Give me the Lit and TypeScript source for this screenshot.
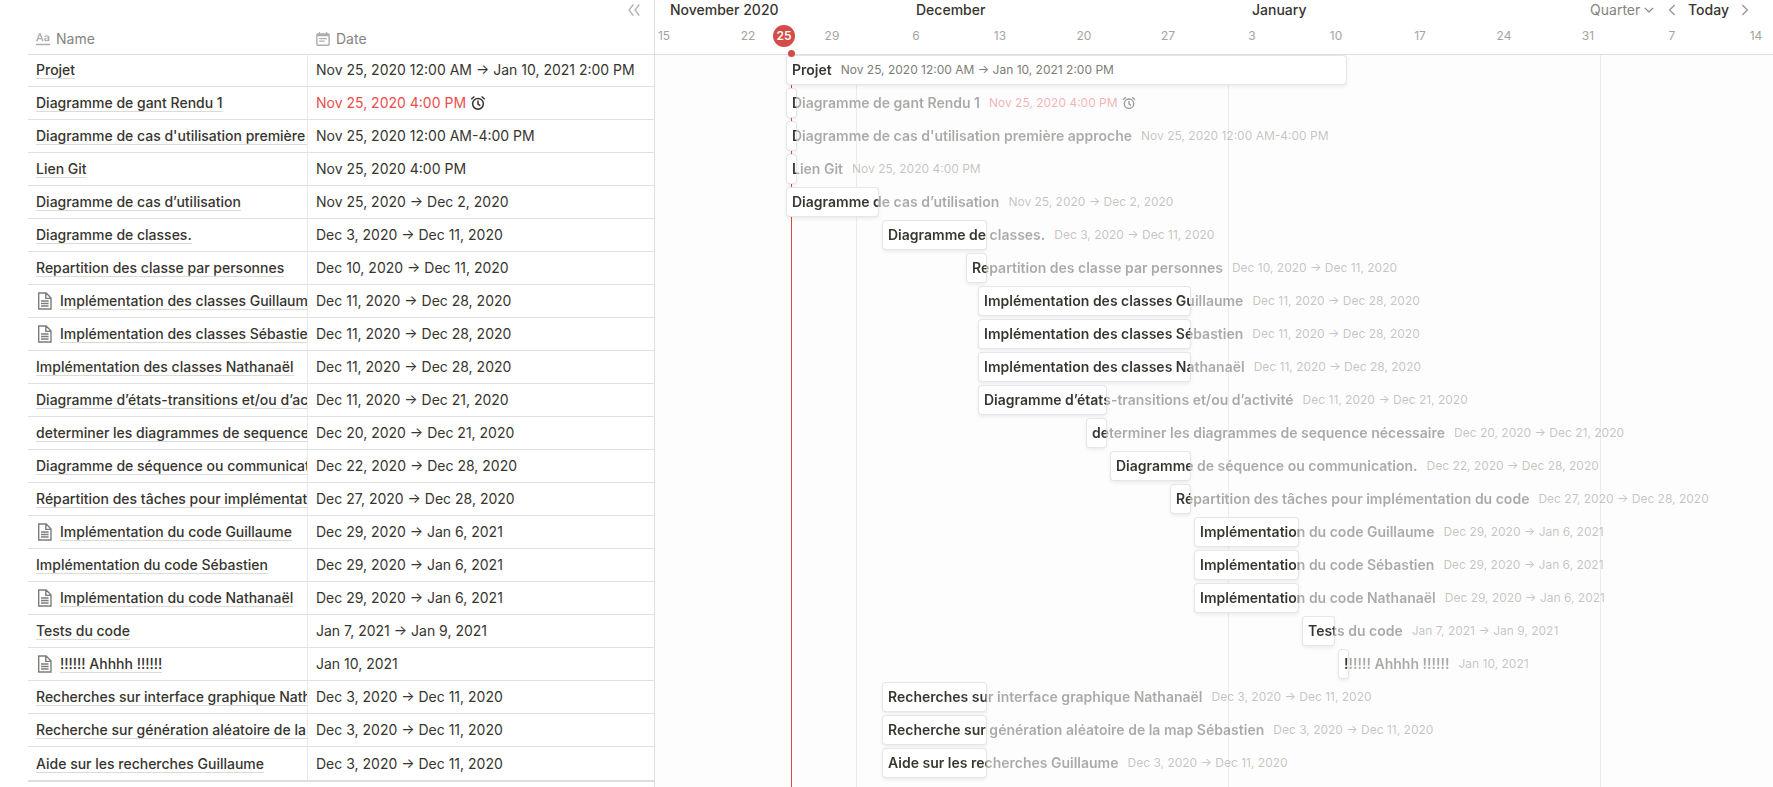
import { LitElement, html, svg, css, nothing } from "lit";
import { customElement, property } from "lit/decorators.js";
import { styleMap } from "lit/directives/style-map.js";

interface Task {
  name: string;
  date: string;
  /** First and last day, counted from Nov 15, 2020. */
  start: number;
  end: number;
  page?: boolean;
  late?: boolean;
}

const DAY = 12;
const ORIGIN = 9;
/** Bars longer than this many days hold their whole label. */
const LONG_BAR = 30;

const TASKS: Task[] = [
  { name: "Projet", date: "Nov 25, 2020 12:00 AM → Jan 10, 2021 2:00 PM", start: 10, end: 56 },
  { name: "Diagramme de gant Rendu 1", date: "Nov 25, 2020 4:00 PM", start: 10, end: 10, late: true },
  { name: "Diagramme de cas d'utilisation première approche", date: "Nov 25, 2020 12:00 AM-4:00 PM", start: 10, end: 10 },
  { name: "Lien Git", date: "Nov 25, 2020 4:00 PM", start: 10, end: 10 },
  { name: "Diagramme de cas d’utilisation", date: "Nov 25, 2020 → Dec 2, 2020", start: 10, end: 17 },
  { name: "Diagramme de classes.", date: "Dec 3, 2020 → Dec 11, 2020", start: 18, end: 26 },
  { name: "Repartition des classe par personnes", date: "Dec 10, 2020 → Dec 11, 2020", start: 25, end: 26 },
  { name: "Implémentation des classes Guillaume", date: "Dec 11, 2020 → Dec 28, 2020", start: 26, end: 43, page: true },
  { name: "Implémentation des classes Sébastien", date: "Dec 11, 2020 → Dec 28, 2020", start: 26, end: 43, page: true },
  { name: "Implémentation des classes Nathanaël", date: "Dec 11, 2020 → Dec 28, 2020", start: 26, end: 43 },
  { name: "Diagramme d’états-transitions et/ou d’activité", date: "Dec 11, 2020 → Dec 21, 2020", start: 26, end: 36 },
  { name: "determiner les diagrammes de sequence nécessaire", date: "Dec 20, 2020 → Dec 21, 2020", start: 35, end: 36 },
  { name: "Diagramme de séquence ou communication.", date: "Dec 22, 2020 → Dec 28, 2020", start: 37, end: 43 },
  { name: "Répartition des tâches pour implémentation du code", date: "Dec 27, 2020 → Dec 28, 2020", start: 42, end: 43 },
  { name: "Implémentation du code Guillaume", date: "Dec 29, 2020 → Jan 6, 2021", start: 44, end: 52, page: true },
  { name: "Implémentation du code Sébastien", date: "Dec 29, 2020 → Jan 6, 2021", start: 44, end: 52 },
  { name: "Implémentation du code Nathanaël", date: "Dec 29, 2020 → Jan 6, 2021", start: 44, end: 52, page: true },
  { name: "Tests du code", date: "Jan 7, 2021 → Jan 9, 2021", start: 53, end: 55 },
  { name: "!!!!!! Ahhhh !!!!!!", date: "Jan 10, 2021", start: 56, end: 56, page: true },
  { name: "Recherches sur interface graphique Nathanaël", date: "Dec 3, 2020 → Dec 11, 2020", start: 18, end: 26 },
  { name: "Recherche sur génération aléatoire de la map Sébastien", date: "Dec 3, 2020 → Dec 11, 2020", start: 18, end: 26 },
  { name: "Aide sur les recherches Guillaume", date: "Dec 3, 2020 → Dec 11, 2020", start: 18, end: 26 },
];

const MONTH_STARTS = [16, 47, 78];
const MONTHS = [
  { label: "December", day: 21 },
  { label: "January", day: 49 },
];
const DAYS = [
  { label: "15", day: 0 },
  { label: "22", day: 7 },
  { label: "25", day: 10, today: true },
  { label: "29", day: 14 },
  { label: "6", day: 21 },
  { label: "13", day: 28 },
  { label: "20", day: 35 },
  { label: "27", day: 42 },
  { label: "3", day: 49 },
  { label: "10", day: 56 },
  { label: "17", day: 63 },
  { label: "24", day: 70 },
  { label: "31", day: 77 },
  { label: "7", day: 84 },
  { label: "14", day: 91 },
];

const at = (day: number) => styleMap({ left: `${day * DAY + ORIGIN}px` });

const clock = svg`<g fill="none" stroke="currentColor" stroke-width="1.5">
  <circle cx="8" cy="8.8" r="5.4"/><path d="M8 5.6V9l2.3 1.7M1.2 4.2L4.4 1.5M14.8 4.2L11.6 1.5"/></g>`;

const shared = css`
  * { box-sizing: border-box; }
  svg { display: block; flex: none; }
  button, select { font: inherit; color: inherit; background: none; border: 0; padding: 0; margin: 0; appearance: none; cursor: pointer; }
`;

@customElement("task-table")
class TaskTable extends LitElement {
  @property({ attribute: false }) tasks: Task[] = [];

  static styles = [
    shared,
    css`
      :host { display: block; }
      .tools { display: flex; justify-content: flex-end; align-items: center; height: 20px; padding-right: 13px; margin-bottom: 4px; color: #b5b4b1; }
      .wrap { padding-left: 28px; }
      table { width: 100%; table-layout: fixed; border-collapse: separate; border-spacing: 0; border-bottom: 2px solid #dededd; }
      .name-col { width: 280px; }
      th { height: 30px; padding: 0 8px; font-weight: 400; text-align: left; color: #85847f; }
      .head { display: flex; align-items: center; gap: 6px; }
      .head svg { color: #aeadab; }
      td { height: 33px; padding: 0 8px; border-bottom: 1px solid #e0e0df; white-space: nowrap; overflow: hidden; }
      tr:first-child td { box-shadow: inset 0 1px #dededd; }
      tr:last-child td { border-bottom: 0; }
      .name { border-right: 1px solid #e9e9e8; padding-right: 0; font-weight: 500; }
      .cell { display: flex; align-items: center; gap: 7px; overflow: hidden; height: 24px; }
      .when { gap: 4px; }
      .cell a { color: inherit; text-decoration: none; line-height: 17px; border-bottom: 1px solid #dcdbda; }
      .cell svg { color: #7f7d79; }
      .late { color: #eb4d4d; }
      .cell .clock { color: #37352f; }
    `,
  ];

  render() {
    return html`
      <div class="tools">
        <button aria-label="Hide table">
          <svg width="14" height="14" viewBox="0 0 14 14" fill="none" stroke="currentColor" stroke-width="1.4"><path d="M6.3 1.5L2 7l4.3 5.5M12.3 1.5L8 7l4.3 5.5"/></svg>
        </button>
      </div>
      <div class="wrap">
        <table>
          <colgroup><col class="name-col" /><col /></colgroup>
          <thead>
            <tr>
              <th scope="col"><span class="head">
                <svg width="14" height="14" viewBox="0 0 14 14" fill="currentColor"><path d="M0 11.8h14v1.5H0zM3 1.2h1.7l2.9 8H6l-.6-1.9H2.3L1.7 9.2H.1zm.8 1.9L2.7 6H5zM10.6 3.3c1.8 0 2.8.9 2.8 2.3v3.6H12v-.8c-.4.6-1 .9-1.8.9-1.3 0-2.1-.7-2.1-1.8 0-1.1.8-1.7 2.3-1.8l1.5-.1v-.5c0-.6-.4-.9-1.2-.9-.7 0-1.1.3-1.2.7H8.2c.1-1 1-1.6 2.4-1.6zm1.3 3.2l-1.3.1c-.7 0-1 .3-1 .7s.4.7.9.7c.8 0 1.4-.5 1.4-1.1z"/></svg>
                Name</span></th>
              <th scope="col"><span class="head">
                <svg width="14" height="14" viewBox="0 0 14 14" fill="currentColor"><path d="M10.9 7.3H3.2V6h7.7zM8.6 9.8H3.2V8.500h5.400zM12.1 1.2h-.9V0H9.9v1.2H4.1V0H2.800v1.200h-.9C1 1.2.2 1.9.2 2.8v9.500c0 .9.8 1.6 1.7 1.6h10.2c.9 0 1.7-.7 1.7-1.6V2.8c0-.9-.8-1.6-1.7-1.6zm.3 11.3H1.6V4.2h10.8z"/></svg>
                Date</span></th>
            </tr>
          </thead>
          <tbody>
            ${this.tasks.map(
              (t) => html`<tr>
                <td class="name"><div class="cell">
                  ${t.page
                    ? html`<svg width="17" height="18" viewBox="0 0 17 18" fill="none" stroke="currentColor" stroke-width="1.4"><path d="M2.7 1h7.5l4.8 5v11H2.7zM9.8 1v5.4H15M5 9h7.6M5 11.5h7.6M5 14h7.6"/></svg>`
                    : nothing}
                  <a href="#">${t.name}</a>
                </div></td>
                <td><div class="cell when">
                  <span class=${t.late ? "late" : ""}>${t.date}</span>
                  ${t.late ? html`<svg class="clock" width="16" height="16" viewBox="0 0 16 16">${clock}</svg>` : nothing}
                </div></td>
              </tr>`
            )}
          </tbody>
        </table>
      </div>
    `;
  }
}

@customElement("task-timeline")
class TaskTimeline extends LitElement {
  @property({ attribute: false }) tasks: Task[] = [];

  static styles = [
    shared,
    css`
      :host { display: flex; flex-direction: column; position: relative; overflow: hidden; border-left: 1px solid #e0e0df; }
      .months { display: flex; align-items: center; justify-content: space-between; height: 20px; padding: 0 24px 0 15px; font-weight: 500; position: relative; }
      .month, .day { position: absolute; }
      .controls { display: flex; align-items: center; }
      .range { display: flex; align-items: center; gap: 3px; color: #85847f; font-weight: 400; margin-right: 14px; }
      .step { color: #9b9a97; }
      .today-button { margin: 0 12px; }
      .days { height: 34px; position: relative; font-size: 12px; line-height: 32px; color: #a5a4a1; }
      .day { transform: translateX(-50%); }
      .day.today { top: 5px; width: 22px; height: 22px; line-height: 22px; border-radius: 50%; background: #d44c47; color: #fff; font-weight: 600; text-align: center; }
      .canvas { flex: 1; position: relative; background: #fdfdfd; box-shadow: inset 0 1px #dededd; }
      .rule, .now { position: absolute; top: 1px; bottom: 0; width: 1px; background: #ececeb; }
      .now { background: #d44c47; margin-left: 7px; }
      .dot { position: absolute; top: -4px; width: 7px; height: 7px; margin-left: 4px; border-radius: 50%; background: #d44c47; }
      .row { position: relative; height: 33px; }
      .bar { position: absolute; top: 2px; height: 28px; margin-left: 3px; border-radius: 3px; background: #fff; box-shadow: 0 0 0 1px #e6e6e5, 0 2px 4px #0f0f0f1a; display: flex; align-items: center; gap: 9px; padding-left: 5px; white-space: nowrap; }
      .title {
        font-weight: 600;
        color: #37352f;
        background: linear-gradient(90deg, #37352f var(--inside), #37352f6b var(--inside));
        background-clip: text;
        -webkit-background-clip: text;
        -webkit-text-fill-color: transparent;
      }
      .date { display: flex; gap: 4px; align-items: center; font-size: 12px; color: #37352f4d; }
      .long .date { color: #7d7c78; }
      .late .date { color: #eb4d4d70; }
      .date svg { color: #37352f80; }
    `,
  ];

  render() {
    return html`
      <div class="months">
        <span>November 2020</span>
        ${MONTHS.map((m) => html`<span class="month" style=${at(m.day)}>${m.label}</span>`)}
        <div class="controls">
          <label class="range">
            <select aria-label="Time scale"><option>Quarter</option></select>
            <svg width="10" height="10" viewBox="0 0 10 10" fill="none" stroke="currentColor" stroke-width="1.2"><path d="M.8 2.8L5 7l4.2-4.2"/></svg>
          </label>
          <button class="step" aria-label="Previous">
            <svg width="8" height="12" viewBox="0 0 8 12" fill="none" stroke="currentColor" stroke-width="1.4"><path d="M6.6 1L1.6 6l5 5"/></svg>
          </button>
          <button class="today-button">Today</button>
          <button class="step" aria-label="Next">
            <svg width="8" height="12" viewBox="0 0 8 12" fill="none" stroke="currentColor" stroke-width="1.4"><path d="M1.4 1l5 5-5 5"/></svg>
          </button>
        </div>
      </div>
      <div class="days">
        ${DAYS.map((d) => html`<span class="day ${d.today ? "today" : ""}" style=${at(d.day)}>${d.label}</span>`)}
      </div>
      <div class="canvas">
        ${MONTH_STARTS.map((d) => html`<div class="rule" style=${at(d)}></div>`)}
        <div class="now" style=${at(10)}></div>
        ${this.tasks.map((t) => {
          const width = Math.max(9, (t.end - t.start + 1) * DAY - 5);
          const long = t.end - t.start > LONG_BAR;
          return html`<div class="row ${t.late ? "late" : ""} ${long ? "long" : ""}">
            <div
              class="bar"
              style=${styleMap({ left: `${t.start * DAY + ORIGIN}px`, width: `${width}px`, "--inside": `${width - 5}px` })}
            >
              <span class="title">${t.name}</span>
              <span class="date">${t.date}
                ${t.late ? html`<svg width="14" height="14" viewBox="0 0 16 16">${clock}</svg>` : nothing}
              </span>
            </div>
          </div>`;
        })}
        <div class="dot" style=${at(10)}></div>
      </div>
    `;
  }
}

@customElement("app-root")
class AppRoot extends LitElement {
  static styles = css`
    :host { display: grid; grid-template-columns: 654px minmax(0, 1fr); min-height: 100vh; background: #fff; color: #37352f; font: 14px/20px Inter, "Liberation Sans", sans-serif; overflow: hidden; }
  `;

  render() {
    return html`<task-table .tasks=${TASKS}></task-table><task-timeline .tasks=${TASKS}></task-timeline>`;
  }
}
